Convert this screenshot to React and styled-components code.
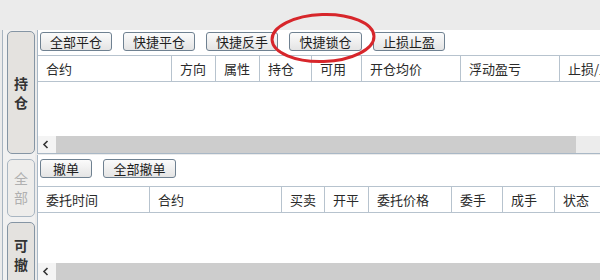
import React from "react";
import styled, { createGlobalStyle } from "styled-components";

const GlobalStyle = createGlobalStyle`
  html, body {
    margin: 0;
    padding: 0;
    background: #ebebeb;
  }
  body {
    font-family: "Noto Sans CJK SC", "Noto Sans", sans-serif;
    font-size: 13px;
    color: #222;
  }
`;

const positionCols = [
  { label: "合约", width: 134 },
  { label: "方向", width: 44 },
  { label: "属性", width: 44 },
  { label: "持仓", width: 52 },
  { label: "可用", width: 50 },
  { label: "开仓均价", width: 99 },
  { label: "浮动盈亏", width: 99 },
  { label: "止损/止盈", width: 80 },
];

const orderCols = [
  { label: "委托时间", width: 112 },
  { label: "合约", width: 132 },
  { label: "买卖", width: 43 },
  { label: "开平", width: 44 },
  { label: "委托价格", width: 83 },
  { label: "委手", width: 51 },
  { label: "成手", width: 52 },
  { label: "状态", width: 80 },
];

const LeftArrow = () => (
  <svg width="18" height="17" viewBox="0 0 18 17">
    <path d="M9.5 5 L6 8.5 L9.5 12" fill="none" stroke="#333" strokeWidth="1.6" />
  </svg>
);

const App = () => {
  return (
    <>
      <GlobalStyle />
      <Page>
        <TopStrip />
        <Body>
          <Sidebar>
            <Tab $height={123}>
              <span>持</span>
              <span>仓</span>
            </Tab>
            <Tab $height={58} $dim>
              <span>全</span>
              <span>部</span>
            </Tab>
            <Tab $height={66}>
              <span>可</span>
              <span>撤</span>
            </Tab>
          </Sidebar>
          <Main>
            <Panel $height={124}>
              <Toolbar $pad="2px 0 0 2px" $height={25}>
                <Button>全部平仓</Button>
                <Button>快捷平仓</Button>
                <Button>快捷反手</Button>
                <Button $w={73}>快捷锁仓</Button>
                <Button>止损止盈</Button>
              </Toolbar>
              <Header>
                {positionCols.map((c) => (
                  <HeadCell key={c.label} $w={c.width}>
                    {c.label}
                  </HeadCell>
                ))}
              </Header>
              <Rows />
              <ScrollBar>
                <Arrow>
                  <LeftArrow />
                </Arrow>
                <Thumb $w={520} />
                <Track />
              </ScrollBar>
            </Panel>
            <Panel $height={125} $last>
              <Toolbar $pad="4px 0 0 2px" $height={31}>
                <Button $w={52}>撤单</Button>
                <Button $w={73}>全部撤单</Button>
              </Toolbar>
              <Header>
                {orderCols.map((c) => (
                  <HeadCell key={c.label} $w={c.width}>
                    {c.label}
                  </HeadCell>
                ))}
              </Header>
              <Rows />
              <ScrollBar>
                <Arrow>
                  <LeftArrow />
                </Arrow>
                <Thumb $w={600} />
              </ScrollBar>
            </Panel>
          </Main>
        </Body>
        <Highlight viewBox="0 0 110 54" width="110" height="54">
          <ellipse
            cx="55"
            cy="27"
            rx="51"
            ry="23.5"
            fill="none"
            stroke="#d7262b"
            strokeWidth="3"
            transform="rotate(-2 55 27)"
          />
        </Highlight>
      </Page>
    </>
  );
};

export default App;

const Page = styled.div`
  position: relative;
  width: 600px;
  height: 280px;
  overflow: hidden;
  display: flex;
  flex-direction: column;
`;

const TopStrip = styled.div`
  height: 30px;
  flex-shrink: 0;
`;

const Body = styled.div`
  flex: 1;
  display: flex;
  min-height: 0;
`;

const Sidebar = styled.div`
  width: 33px;
  margin-left: 2px;
  border-left: 1px solid #a7b4c0;
  background: #f1f1f1;
  padding: 1px 0 0 4px;
  box-sizing: border-box;
  display: flex;
  flex-direction: column;
  gap: 5px;
  flex-shrink: 0;
`;

const Tab = styled.div`
  width: 28px;
  height: ${(p) => p.$height}px;
  flex-shrink: 0;
  box-sizing: border-box;
  border: 1px solid ${(p) => (p.$dim ? "#a9b6c2" : "#8595a4")};
  border-radius: 5px;
  background: ${(p) => (p.$dim ? "#eeedeb" : "#e4e2df")};
  color: ${(p) => (p.$dim ? "#b0b0b0" : "#333")};
  font-weight: ${(p) => (p.$dim ? "normal" : "bold")};
  font-size: 14px;
  line-height: 19px;
  display: flex;
  flex-direction: column;
  align-items: center;
  justify-content: center;
`;

const Main = styled.div`
  flex: 1;
  display: flex;
  flex-direction: column;
  margin-left: 2px;
  min-width: 0;
`;

const Panel = styled.div`
  height: ${(p) => p.$height}px;
  flex-shrink: 0;
  box-sizing: border-box;
  background: #fff;
  border-left: 1px solid #a9b8c6;
  border-bottom: ${(p) => (p.$last ? "none" : "1px solid #a9b8c6")};
  margin-bottom: ${(p) => (p.$last ? 0 : 1)}px;
  display: flex;
  flex-direction: column;
  overflow: hidden;
`;

const Toolbar = styled.div`
  height: ${(p) => p.$height}px;
  box-sizing: border-box;
  padding: ${(p) => p.$pad};
  display: flex;
  gap: 11px;
  align-items: flex-start;
  flex-shrink: 0;
`;

const Button = styled.div`
  width: ${(p) => p.$w || 72}px;
  height: 19px;
  box-sizing: border-box;
  border: 1px solid #6f8191;
  border-radius: 3px;
  background: linear-gradient(#fbfbfb, #e4e4e4);
  font-size: 13px;
  line-height: 17px;
  text-align: center;
  color: #1e1e1e;
  flex-shrink: 0;
`;

const Header = styled.div`
  display: flex;
  height: 27px;
  box-sizing: border-box;
  border-top: 1px solid #b7c3ce;
  border-bottom: 1px solid #b7c3ce;
  flex-shrink: 0;
`;

const HeadCell = styled.div`
  width: ${(p) => p.$w}px;
  flex-shrink: 0;
  box-sizing: border-box;
  border-right: 1px solid #b7c3ce;
  padding-left: 8px;
  line-height: 25px;
  font-size: 13px;
  color: #2a2a2a;
  white-space: nowrap;
  overflow: hidden;
`;

const Rows = styled.div`
  flex: 1;
`;

const ScrollBar = styled.div`
  height: 17px;
  display: flex;
  flex-shrink: 0;
  background: #e9e9e9;
`;

const Arrow = styled.div`
  width: 18px;
  height: 17px;
  background: #f4f4f4;
  flex-shrink: 0;
  display: flex;
`;

const Thumb = styled.div`
  width: ${(p) => p.$w}px;
  background: #cdcdcd;
  flex-shrink: 0;
`;

const Track = styled.div`
  flex: 1;
  background: #ececec;
`;

const Highlight = styled.svg`
  position: absolute;
  left: 268px;
  top: 11px;
  pointer-events: none;
`;
